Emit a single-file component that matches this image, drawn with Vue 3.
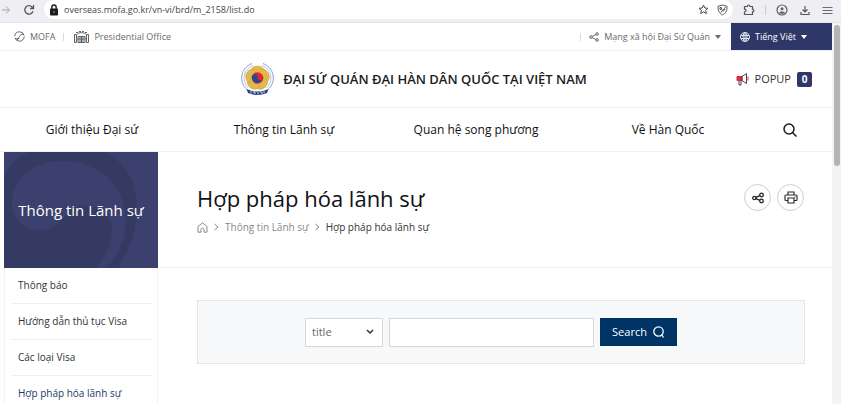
<script setup>
import { ref } from 'vue'

const address = ref('overseas.mofa.go.kr/vn-vi/brd/m_2158/list.do')
const field = ref('title')
const keyword = ref('')
const menu = ['Giới thiệu Đại sứ', 'Thông tin Lãnh sự', 'Quan hệ song phương', 'Về Hàn Quốc']
const side = [
  { label: 'Thông báo' },
  { label: 'Hướng dẫn thủ tục Visa' },
  { label: 'Các loại Visa' },
  { label: 'Hợp pháp hóa lãnh sự', active: true },
]
const petals = [0, 72, 144, 216, 288]
</script>

<template>
  <div class="window">
    <div class="browser">
      <button class="tool forward" aria-label="Forward">
        <svg width="10" height="12" viewBox="0 0 10 12" fill="none" stroke="#a5a5ab"><path d="M1 6h7.500M5 2.500l3.500 3.500L5 9.500" /></svg>
      </button>
      <button class="tool" aria-label="Reload">
        <svg width="12" height="12" viewBox="0 0 12 12" fill="none" stroke="#55555c" stroke-width="1.300"><path d="M10 7.200A4.200 4.200 0 1 1 9.200 3.200L10.500 4.500M10.500 1v3.500H7" /></svg>
      </button>
      <div class="address">
        <svg width="10" height="12" viewBox="0 0 10 12"><path d="M2.800 5V3.200a2.200 2.200 0 0 1 4.400 0V5" fill="none" stroke="#1c1c20" stroke-width="1.400" /><rect x="1" y="4.500" width="8" height="7" rx="1" fill="#1c1c20" /><circle cx="5" cy="8" r="1" fill="#777" /></svg>
        <input v-model="address" aria-label="Address" />
        <svg width="11" height="11" viewBox="0 0 11 11" fill="none" stroke="#4c4c52"><path d="M5.500 1l1.300 3 3.200.3-2.400 2.100.7 3.200-2.800-1.700-2.800 1.700.7-3.200L1 4.300 4.200 4z" /></svg>
        <svg class="shield" width="11" height="12" viewBox="0 0 11 12" fill="none" stroke="#55555b"><path d="M5.500 1l4.500 1.300c.2 4-1 6.700-4.500 8.700C2 9 .8 6.300 1 2.300zM3 3.500h1.500v2H3zM8.500 3L3.800 8.500M6 7.500l2-2.500" /></svg>
      </div>
      <button class="tool" aria-label="Extensions">
        <svg width="12" height="12" viewBox="0 0 12 12" fill="none" stroke="#55555b" stroke-width="1.200"><path d="M1.500 2.500h3c0-2 2.500-2 2.500 0h2.500v2.700c1.800 0 1.800 2.600 0 2.600v2.700h-8V8c2 0 2-2.800 0-2.800z" /></svg>
      </button>
      <i class="rule"></i>
      <button class="tool" aria-label="Profile">
        <svg width="12" height="12" viewBox="0 0 12 12" fill="none" stroke="#606066" stroke-width="1.200"><circle cx="6" cy="6" r="5" /><circle cx="6" cy="4.700" r="1.500" fill="#606066" stroke="none" /><path d="M3 8.800c1.500-1.800 4.500-1.800 6 0-1.500 1.500-4.500 1.500-6 0z" fill="#606066" stroke="none" /></svg>
      </button>
      <button class="tool" aria-label="Downloads">
        <svg width="10" height="12" viewBox="0 0 10 12" fill="none" stroke="#55555b" stroke-width="1.200"><path d="M5 2v6M2.500 5.500L5 8l2.500-2.500M1 8v2.500h8V8" /></svg>
      </button>
      <button class="tool" aria-label="Menu">
        <svg width="11" height="12" viewBox="0 0 11 12" stroke="#6c6c72"><path d="M.5 3.500h10M.5 6.500h10M.5 9.500h10" /></svg>
      </button>
    </div>

    <div class="viewport">
      <div class="page">
        <div class="utility">
          <a href="#" class="mofa">
            <svg width="11" height="11" viewBox="0 0 11 11" fill="none" stroke="#66666b"><circle cx="5.500" cy="5.500" r="4.700" stroke-dasharray="13 1.800" /><path d="M1 7.500c4 .8 4-1.200 4.500-2S7 2.500 10 3.500M3 9l2-2" /></svg>
            MOFA
          </a>
          <i class="rule"></i>
          <a href="#" class="office">
            <svg width="15" height="12" viewBox="0 0 15 12" fill="none" stroke="#626267"><path d="M.5 11.500v-8h2v8zM12.500 11.500v-8h2v8zM3 3.500c1-2.500 8-2.500 9 0M2 1.500h2M5 .5h2M8 .5h2M11 1.500h2M4 5.500h7v6H4zM6 5.500v6M7.500 5.500v6M9 5.500v6M3.500 8h8" /></svg>
            Presidential Office
          </a>
          <i class="rule push"></i>
          <button class="social">
            <svg width="10" height="10" viewBox="0 0 10 10" fill="none" stroke="#66666b"><circle cx="2" cy="5" r="1.300" /><circle cx="8" cy="2" r="1.300" /><circle cx="8" cy="8" r="1.300" /><path d="M3.200 4.400l3.600-1.800M3.200 5.600l3.600 1.800" /></svg>
            Mạng xã hội Đại Sứ Quán
            <i class="caret"></i>
          </button>
          <button class="language">
            <svg width="10" height="10" viewBox="0 0 10 10" fill="none" stroke="#e3e6f2"><circle cx="5" cy="5" r="4.500" /><ellipse cx="5" cy="5" rx="2" ry="4.500" /><path d="M1 3.500h8M1 6.500h8M5 .5v9" /></svg>
            Tiếng Việt
            <i class="caret"></i>
          </button>
        </div>

        <header class="header">
          <a href="#" class="brand">
            <svg width="33" height="34" viewBox="0 0 33 34">
              <g fill="none" stroke="#8ba0cc"><path d="M11 1.500C-1.500 6.500-2 21 6 27.500M22 1.500C34.500 6.500 35 21 27 27.500" /><path d="M12 3.500C1 8 1 20 7.500 26M21 3.500C32 8 32 20 25.500 26" stroke="#b6c3df" /></g>
              <g stroke="#c9a03a" stroke-width=".5" fill="#e0b94c"><ellipse v-for="a in petals" :key="a" cx="16.500" cy="9.500" rx="6.800" ry="5.500" :transform="`rotate(${a} 16.500 16)`" /></g>
              <circle cx="16.500" cy="16" r="8" fill="#e0b94c" />
              <circle cx="16.500" cy="16" r="5.800" fill="#dc2634" />
              <path d="M10.700 15a2.900 2.900 0 0 1 5.800 1 2.900 2.900 0 0 0 5.800-1 5.800 5.800 0 1 1-11.600 0z" fill="#26489b" />
              <path d="M5.500 27l4 1.500q7 2 14 0l4-1.500-1.500 4q-9.500 4-19 0z" fill="#264181" />
              <path d="M10 29v2.500M12 30h2v2M17 30v2.500M19 30h2v2M23 29v2" fill="none" stroke="#cfd7ea" />
            </svg>
            ĐẠI SỨ QUÁN ĐẠI HÀN DÂN QUỐC TẠI VIỆT NAM
          </a>
          <button class="popup">
            <svg width="13" height="14" viewBox="0 0 13 14" fill="none" stroke="#4d4145"><path d="M1 4.500h5v4H1z" fill="#e42c49" stroke="#c62d43" /><path d="M6 4.500l4.500-3v10L6 8.500zM3 9v4h2V9" /><path d="M12 4.500v4" stroke="#d63b50" /></svg>
            POPUP
            <b>0</b>
          </button>
        </header>

        <nav class="nav">
          <a v-for="item in menu" :key="item" href="#">{{ item }}</a>
          <button aria-label="Search site">
            <svg width="14" height="14" viewBox="0 0 14 14" fill="none" stroke="#1b1b1b" stroke-width="1.500"><circle cx="6" cy="6" r="5" /><path d="M9.500 9.500l4 4" /></svg>
          </button>
        </nav>

        <div class="body">
          <aside class="side">
            <h2>
              <svg viewBox="0 0 153 115" preserveAspectRatio="none" aria-hidden="true">
                <rect width="153" height="115" fill="#3b406f" />
                <path d="M0 25Q6 9 24 0H101Q132 18 132 54Q132 88 113 115H0z" fill="#353a62" />
                <path d="M8 50C8 27 28 9 57 9C94 9 121 34 121 67Q121 96 101 115H91Q107 99 107 77C107 61 94 53 77 53C62 53 60 77 36 77C19 77 8 66 8 50z" fill="#3b406f" />
              </svg>
              <span>Thông tin Lãnh sự</span>
            </h2>
            <ul>
              <li v-for="item in side" :key="item.label"><a href="#" :class="{ active: item.active }">{{ item.label }}</a></li>
            </ul>
          </aside>

          <main class="main">
            <div class="heading">
              <div>
                <h1>Hợp pháp hóa lãnh sự</h1>
                <div class="crumbs">
                  <a href="#" aria-label="Home"><svg width="11" height="11" viewBox="0 0 11 11" fill="none" stroke="#8a8a8a"><path d="M1 4.500L5.500.8 10 4.500v5.700H7V7.500a1.500 1.500 0 0 0-3 0v2.700H1z" /></svg></a>
                  <svg width="5" height="8" viewBox="0 0 5 8" fill="none" stroke="#888"><path d="M.5 1l3.500 3L.5 7" /></svg>
                  <a href="#">Thông tin Lãnh sự</a>
                  <svg width="5" height="8" viewBox="0 0 5 8" fill="none" stroke="#888"><path d="M.5 1l3.500 3L.5 7" /></svg>
                  <a href="#" class="current">Hợp pháp hóa lãnh sự</a>
                </div>
              </div>
              <div class="actions">
                <button aria-label="Share">
                  <svg width="12" height="12" viewBox="0 0 12 12" fill="none" stroke="#222" stroke-width="1.300"><circle cx="2.300" cy="6" r="1.600" /><circle cx="9.500" cy="3" r="1.800" /><circle cx="9.500" cy="9" r="1.800" /><path d="M4 5.400l3.800-1.700M4 6.600l3.800 1.700" /></svg>
                </button>
                <button aria-label="Print">
                  <svg width="14" height="13" viewBox="0 0 14 13" fill="none" stroke="#2d2d2d" stroke-width="1.200"><path d="M4 4V1h6v3M3.500 9.500H1.800Q1 9.500 1 8.500V5Q1 4 2 4h10q1 0 1 1v3.500q0 1-.8 1h-1.700M4 7h6v5H4zM10.500 6h1" /></svg>
                </button>
              </div>
            </div>

            <form class="search" @submit.prevent>
              <div class="select">
                <select v-model="field" aria-label="Search field"><option>title</option></select>
                <svg width="8" height="6" viewBox="0 0 8 6" fill="none" stroke="#333" stroke-width="1.500"><path d="M1 1l3 3 3-3" /></svg>
              </div>
              <input v-model="keyword" type="text" aria-label="Keyword" />
              <button type="submit">
                Search
                <svg width="12" height="12" viewBox="0 0 12 12" fill="none" stroke="#fff" stroke-width="1.300"><circle cx="5.500" cy="5.500" r="4.700" /><path d="M8.500 8.500l2 3" /></svg>
              </button>
            </form>
          </main>
        </div>
      </div>
      <div class="scrollbar"><i></i></div>
    </div>
  </div>
</template>

<style>
body { margin: 0; background: #fff; }
</style>

<style scoped>
* { box-sizing: border-box; }
.window {
  display: flex;
  flex-direction: column;
  height: 100vh;
  overflow: hidden;
  font: 11px/16px "Open Sans", "Noto Sans", sans-serif;
  color: #333;
}
button { border: 0; padding: 0; background: none; font: inherit; color: inherit; display: flex; align-items: center; justify-content: center; }
a { color: inherit; text-decoration: none; }
svg { flex: none; display: block; }
h1, h2, ul { margin: 0; padding: 0; }

.browser { flex: none; display: flex; align-items: center; gap: 12px; height: 23px; padding: 0 8px 3px 0; background: #efeef3; border-bottom: 1px solid #e4e3e8; }
.browser .rule { height: 10px; margin: 0 -2px; background: #c9c9ce; }
.forward { margin-left: 1px; }
.address { flex: 1; display: flex; align-items: center; gap: 5px; height: 19px; margin: 0 -2px 0 -3px; padding: 0 5px; border-radius: 10px; background: #fff; }
.address input { flex: 1; min-width: 0; border: 0; padding: 0; background: none; outline: 0; font: 9px/14px "Open Sans", sans-serif; color: #45454b; }
.shield { margin-left: 3px; }
.rule { flex: none; width: 1px; height: 8px; background: #ddd; }

.viewport { flex: 1; display: flex; min-height: 0; }
.page { flex: 1; min-width: 0; overflow: hidden; }
.scrollbar { flex: none; width: 9px; padding: 2px 1px 0 2px; background: #f4f4f4; }
.scrollbar i { display: block; height: 141px; border-radius: 3px; background: #b4b4b4; }

.utility { display: flex; align-items: center; height: 28px; padding-left: 14px; border-bottom: 1px solid #f2f2f2; font-size: 9px; color: #6a6a6a; }
.utility a, .utility button { display: flex; align-items: center; gap: 5px; }
.mofa { margin-right: 8px; }
.office { margin-left: 10px; }
.push { margin-left: auto; }
.utility .social { margin: 0 10px 0 8px; }
.utility .language { align-self: stretch; justify-content: flex-start; width: 101px; padding-left: 9px; background: #2e3767; color: #fff; }
.caret { border: 3px solid transparent; border-top: 4px solid currentColor; border-bottom: 0; }

.header { display: grid; grid-template-columns: 1fr auto 1fr; align-items: center; height: 57px; padding: 0 20px; border-bottom: 1px solid #f2f2f2; }
.brand { grid-column: 2; display: flex; align-items: center; gap: 9px; margin-right: 4px; font-size: 13px; font-weight: 600; color: #1b1b1b; white-space: nowrap; }
.popup { justify-self: end; gap: 6px; }
.popup b { width: 15px; border-radius: 2px; background: #2e3767; color: #fff; font-size: 10px; line-height: 15px; }

.nav { display: grid; grid-template-columns: 23fr 25fr 23fr 25fr 44px; align-items: center; justify-items: center; height: 44px; padding-right: 20px; border-bottom: 1px solid #f2f2f2; font-size: 12px; font-weight: 500; color: #111; }

.body { display: flex; }
.side { flex: none; width: 154px; margin-left: 4px; }
.side h2 { display: grid; place-items: center; height: 116px; font-size: 15px; font-weight: 400; line-height: 20px; color: #fff; }
.side h2 > * { grid-area: 1 / 1; }
.side h2 svg { width: 100%; height: 116px; }
.side ul { list-style: none; padding: 0 6px; border: 1px solid #f2f2f2; border-top: 0; font-size: 10px; }
.side li { padding: 9px 7px 10px; border-bottom: 1px solid #eee; }
.side a.active { color: #1b3a68; }

.main { flex: 1; min-width: 0; }
.heading { display: flex; justify-content: space-between; height: 116px; padding: 31px 28px 0 39px; border-bottom: 1px solid #f2f2f2; }
h1 { font-size: 22px; font-weight: 400; line-height: 30px; color: #111; }
.crumbs { display: flex; align-items: center; gap: 6px; margin-top: 6px; font-size: 10px; color: #8a8a8a; }
.crumbs .current { color: #333; }
.actions { display: flex; gap: 6px; padding-top: 1px; }
.actions button { width: 27px; height: 27px; border: 1px solid #c9ced5; border-radius: 50%; }

.search { display: flex; justify-content: center; align-items: center; gap: 6px; height: 64px; margin: 32px 27px 0 39px; padding-right: 20px; border: 1px solid #e5e5e7; background: #f7f8fa; }
.select { display: grid; align-items: center; width: 78px; }
.select > * { grid-area: 1 / 1; }
.select svg { justify-self: end; margin-right: 9px; pointer-events: none; }
.select select, .search input { width: 100%; height: 29px; border: 1px solid #d6d8db; border-radius: 0; padding: 0 6px; background: #fff; font: inherit; color: #666; appearance: none; }
.search input { width: 205px; }
.search button { gap: 6px; width: 77px; height: 28px; background: #003366; color: #fff; }
</style>
